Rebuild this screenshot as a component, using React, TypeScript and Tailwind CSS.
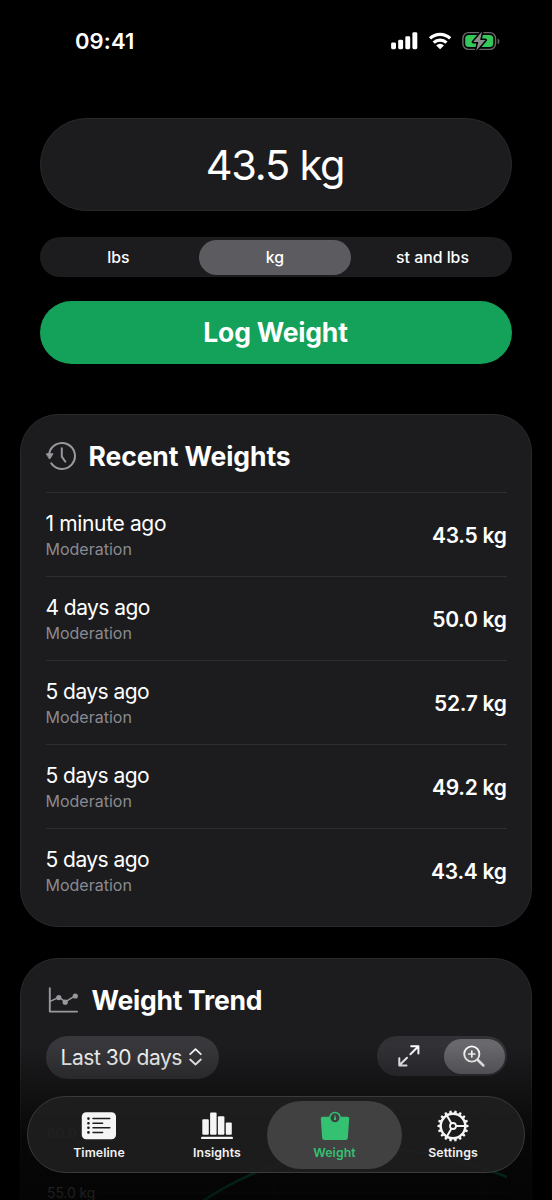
import React from "react";

const entries = [
  { when: "1 minute ago", weight: "43.5 kg" },
  { when: "4 days ago", weight: "50.0 kg" },
  { when: "5 days ago", weight: "52.7 kg" },
  { when: "5 days ago", weight: "49.2 kg" },
  { when: "5 days ago", weight: "43.4 kg" },
];

function StatusBar() {
  return (
    <header className="flex h-[118px] items-start justify-between pt-[27px] pr-[50px] pl-[75px]">
      <span className="text-[22px] leading-[29px] font-semibold tracking-[0.1px]">09:41</span>
      <svg className="mt-[3px]" width="111" height="22" viewBox="0 0 111 22" fill="none">
        <g fill="#fff">
          <rect x="0.1" y="12.6" width="4.9" height="6.6" rx="1.4" />
          <rect x="7.2" y="9.8" width="4.9" height="9.4" rx="1.4" />
          <rect x="14.3" y="6.3" width="4.9" height="12.9" rx="1.4" />
          <rect x="21.4" y="2.2" width="4.9" height="17" rx="1.4" />
          <path d="M49.1 19.3l-3.9-3.9a5.7 5.7 0 0 1 7.8 0z" />
        </g>
        <g stroke="#fff" strokeWidth="3.2">
          <path d="M39 8.4a14.6 14.6 0 0 1 20.2 0" />
          <path d="M42.7 12.7a9.3 9.3 0 0 1 12.8 0" />
        </g>
        <rect x="71.9" y="2.6" width="32.6" height="16.8" rx="5.6" stroke="#69696b" strokeWidth="1.4" />
        <path d="M106.7 8.4c2 .7 2.5 4.7 0 5.6z" fill="#69696b" />
        <rect x="74.2" y="4.9" width="28" height="12.2" rx="3.6" fill="#34c759" />
        <path d="M91 1.4L82.2 11.9h5.1L85.2 20.8l9.3-10.7H89.2z" fill="#8b8b8d" stroke="#000" strokeWidth="3" paintOrder="stroke" strokeLinejoin="round" />
      </svg>
    </header>
  );
}

function HistoryIcon() {
  return (
    <svg width="32" height="30" viewBox="1 0 32 30" fill="none" stroke="#98989f" strokeWidth="2" strokeLinecap="round" strokeLinejoin="round">
      <path d="M4.2 12.5A13 13 0 1 1 6.3 22.4" />
      <path d="M1.6 12.8h6.4l-3.2 5z" fill="#98989f" strokeWidth="1" />
      <path d="M16.8 7.3v8.3l3.6 5.2" />
    </svg>
  );
}

function TrendIcon() {
  return (
    <svg width="32" height="26" viewBox="0 0 32 26" fill="none" stroke="#98989f" strokeWidth="1.9" strokeLinecap="round" strokeLinejoin="round">
      <path d="M1.8 1.2v23.4h27.3" />
      <path d="M2 14.4l9-4.2 6.3 4.6 9.8-6" strokeWidth="1.5" />
      <g fill="#98989f" stroke="none">
        <circle cx="10.8" cy="10.6" r="2.6" />
        <circle cx="17.2" cy="15.2" r="2.6" />
        <circle cx="27.3" cy="9" r="2.6" />
      </g>
    </svg>
  );
}

function TimelineIcon() {
  return (
    <svg width="36" height="30" viewBox="0 0 36 30">
      <rect x=".8" y="1.2" width="34.2" height="27" rx="4.4" fill="#f5f5f5" />
      <g stroke="#1e1e1f" strokeWidth="1.5" strokeLinecap="round">
        <path d="M12 7.6h16.8M12 12.3h9.6M12 16.8h16.8M12 21.4h9.6" />
        <path d="M7.4 7.6h.1M7.4 12.3h.1M7.4 16.8h.1M7.4 21.4h.1" strokeWidth="2.6" />
      </g>
    </svg>
  );
}

function InsightsIcon() {
  return (
    <svg width="36" height="30" viewBox="0 0 36 30" fill="#f5f5f5">
      <rect x="3.3" y="8.3" width="6.5" height="15.5" rx="1" />
      <rect x="11.1" y="1.5" width="6.5" height="22.3" rx="1" />
      <rect x="18.9" y="5.2" width="6.5" height="18.6" rx="1" />
      <rect x="26.8" y="11.4" width="6" height="12.4" rx="1" />
      <rect x="2" y="25.7" width="32" height="2.4" rx="1.2" />
    </svg>
  );
}

function WeightIcon() {
  return (
    <svg width="36" height="30" viewBox="0 0 36 30">
      <path d="M5.7 5.7h24.6q2 0 1.9 2l-1.4 19.2q-.2 2-2.2 2H7.4q-2 0-2.2-2L3.8 7.7q-.1-2 1.9-2z" fill="#34c272" />
      <circle cx="18" cy="6.8" r="5.2" fill="#3f3f40" stroke="#34c272" strokeWidth="1.5" />
      <path d="M18 3.2l1 4.4a1.1 1.1 0 1 1-2 0z" fill="#34c272" />
    </svg>
  );
}

const teeth = Array.from({ length: 18 }, (_, i) => i * 20);

function SettingsIcon() {
  return (
    <svg width="36" height="32" viewBox="0 0 36 32" fill="none" stroke="#f5f5f5" strokeWidth="2">
      {teeth.map((a) => (
        <path key={a} d="M16.5 3l.5-2.5h2l.5 2.5z" fill="#f5f5f5" stroke="none" transform={`rotate(${a + 10} 18 16)`} />
      ))}
      <circle cx="18" cy="16" r="12.3" strokeWidth="2.4" />
      <circle cx="18" cy="16" r="3" strokeWidth="1.8" />
      <path d="M21 16h9.5M16.5 13.4l-4.8-8.2M16.5 18.6l-4.8 8.2" />
    </svg>
  );
}

function RecentWeights() {
  return (
    <section className="mx-5 mt-[50px] h-[513px] rounded-[38px] border border-[#29292b] bg-[#1c1c1e] px-[24.5px]">
      <div className="flex h-[77px] items-center gap-[11px] pt-[5px]">
        <HistoryIcon />
        <h2 className="text-[26.5px] leading-8 font-bold tracking-[-0.1px] whitespace-nowrap">Recent Weights</h2>
      </div>
      {entries.map((e, i) => (
        <div key={i} className="flex h-[84px] items-center justify-between border-t border-[#2e2e30]">
          <div className="pt-[2px]">
            <p className={i === 0 ? "text-[21px] leading-[27px] tracking-[-0.35px]" : "text-[21px] leading-[27px] tracking-[-0.55px]"}>{e.when}</p>
            <p className="text-[16px] leading-[24px] text-[#8a8a91]">Moderation</p>
          </div>
          <p className="pt-[2px] text-[21px] font-semibold tracking-[-0.3px]">{e.weight}</p>
        </div>
      ))}
    </section>
  );
}

function WeightTrend() {
  return (
    <section className="mx-5 mt-[31px] h-[400px] rounded-[38px] border border-[#29292b] bg-[#1c1c1e] px-[24.5px]">
      <div className="flex h-[77px] items-center gap-[12px] pt-[4px] pl-[2px]">
        <TrendIcon />
        <h2 className="text-[26.5px] leading-8 font-bold tracking-[-0.25px] whitespace-nowrap">Weight Trend</h2>
      </div>
      <div className="flex items-center justify-between">
        <button className="flex h-[43px] w-[173px] items-center gap-[7px] rounded-full bg-[#38383c] pl-[15px] text-[21px] tracking-[-0.45px] whitespace-nowrap">
          Last 30 days
          <svg className="-mt-px shrink-0" width="13" height="18" viewBox="0 0 13 18" fill="none" stroke="#fff" strokeWidth="1.8" strokeLinecap="round" strokeLinejoin="round">
            <path d="M1.2 6.2l5.3-5 5.3 5M1.2 11.5l5.3 5 5.3-5" />
          </svg>
        </button>
        <div className="-mt-[3px] flex h-10 w-[130px] items-center rounded-full bg-[#313136]">
          <div className="flex w-[67px] justify-center">
            <svg className="-ml-[3px]" width="24" height="24" viewBox="0 0 24 24" fill="none" stroke="#fff" strokeWidth="2" strokeLinecap="round" strokeLinejoin="round">
              <path d="M13.4 10.2l8-8M14.2 2.2h7.2v7.2M10 13.7l-7.7 7.6M2.3 14.2v7.2h7.2" />
            </svg>
          </div>
          <div className="flex h-[35px] w-[61px] items-center justify-center rounded-full bg-[#68686d]">
            <svg width="24" height="24" viewBox="0 0 24 24" fill="none" stroke="#fff" strokeWidth="1.9" strokeLinecap="round">
              <circle cx="9.8" cy="10" r="7.6" />
              <path d="M6.8 10h6M9.8 7v6" strokeWidth="1.7" />
              <path d="M15.8 16l5.6 5.5" strokeWidth="2.5" />
            </svg>
          </div>
        </div>
      </div>
      <svg className="mt-[20px] block" width="461" height="110" viewBox="0 0 461 110" fill="none">
        <text x="1" y="39" fontSize="13.5" fill="#b8b8bd" className="font-semibold">60.0 kg</text>
        <text x="1" y="98.5" fontSize="13.8" fill="#bdbdc2">55.0 kg</text>
        <path d="M55 94h406" stroke="#3a3a3d" />
        <path d="M227 0v110M437 0v110" stroke="#3a3a3d" strokeDasharray="2 3" />
        <path d="M153 105Q176 88 211 73Q330 24 461 78" stroke="#16b866" strokeWidth="2.5" />
      </svg>
    </section>
  );
}

function Tab({ label, active, children }: { label: string; active?: boolean; children: React.ReactNode }) {
  return (
    <button
      className={
        active
          ? "flex h-[68px] w-[135px] flex-col items-center rounded-full bg-[#414142] pt-[9px] text-[#34c272]"
          : "flex h-[68px] w-[118px] flex-col items-center pt-[9px] text-[#f2f2f2]"
      }
    >
      <span className="flex h-[32px] items-center">{children}</span>
      <span className="text-[12.3px] leading-[21px] font-semibold tracking-[0.1px]">{label}</span>
    </button>
  );
}

function TabBar() {
  return (
    <nav className="absolute top-[1096px] left-[27px] flex h-[77px] w-[498px] items-center rounded-full border border-[#3a3a3b] bg-[#1e1e1f]/92 pl-[12px]">
      <Tab label="Timeline"><TimelineIcon /></Tab>
      <Tab label="Insights"><InsightsIcon /></Tab>
      <div className="-mr-[8px] -ml-[9px]"><Tab label="Weight" active><WeightIcon /></Tab></div>
      <Tab label="Settings"><SettingsIcon /></Tab>
    </nav>
  );
}

export default function App() {
  return (
    <div className="relative h-[1200px] w-[552px] overflow-hidden bg-black font-['Inter',sans-serif] text-white">
      <StatusBar />
      <main>
        <div className="px-10">
          <div className="flex h-[93px] items-center justify-center rounded-full border border-[#29292b] bg-[#1c1c1e] pt-px pr-[2px] text-[41.5px] tracking-[-1.2px]">43.5 kg</div>
          <div className="mt-[26px] flex h-10 items-center rounded-full bg-[#1c1c1e] text-[15.8px] font-medium">
            <span className="w-[157px] pt-px text-center">lbs</span>
            <span className="ml-[2px] flex h-[35px] w-[152px] items-center justify-center rounded-full bg-[#5b5b60] pt-px">kg</span>
            <span className="flex-1 pt-px pl-[2px] text-center">st and lbs</span>
          </div>
          <button className="mt-6 flex h-[63px] w-full items-center justify-center rounded-full bg-[#14a15a] pr-px text-[26.5px] font-bold tracking-[-0.2px]">Log Weight</button>
        </div>
        <RecentWeights />
        <WeightTrend />
      </main>
      <div className="absolute inset-x-0 bottom-0 h-[155px] bg-linear-to-b from-transparent via-black/75 via-60% to-black/85" />
      <TabBar />
    </div>
  );
}
